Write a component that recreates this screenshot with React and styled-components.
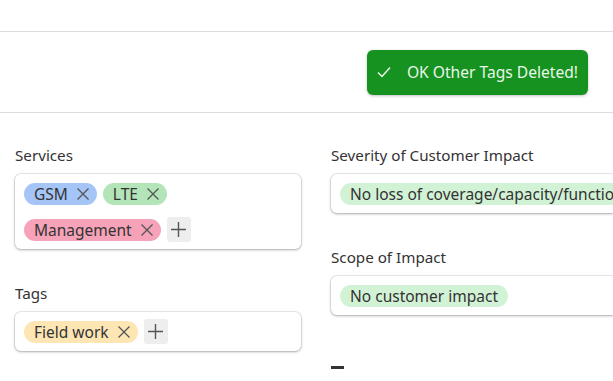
import React from 'react';
import styled, { createGlobalStyle } from 'styled-components';

const Global = createGlobalStyle`
  html, body {
    margin: 0;
    padding: 0;
    background: #fff;
    overflow: hidden;
    font-family: "Noto Sans", "DejaVu Sans", sans-serif;
    color: #333;
  }
`;

const Page = styled.div`
  width: 613px;
  height: 381px;
  overflow: hidden;
`;

const TopBar = styled.div`
  height: 31px;
  border-bottom: 1px solid #dcdcdc;
`;

const Toolbar = styled.div`
  height: 80px;
  display: flex;
  align-items: center;
  justify-content: flex-end;
  padding-right: 25px;
  border-bottom: 1px solid #dcdcdc;
`;

const Toast = styled.div`
  display: flex;
  align-items: center;
  gap: 16px;
  height: 45px;
  padding: 0 10px 0 10px;
  background: #15921f;
  color: #eaf6ea;
  border-radius: 6px;
  box-shadow: 0 1px 3px rgba(0, 0, 0, 0.25);
  font-size: 15.6px;
  white-space: nowrap;
`;

const Content = styled.div`
  display: grid;
  grid-template-columns: 286px 286px;
  column-gap: 30px;
  padding: 32px 15px 0;
`;

const Column = styled.div`
  display: flex;
  flex-direction: column;
`;

const Field = styled.div`
  margin-bottom: 34px;
`;

const Label = styled.div`
  font-size: 15.2px;
  line-height: 20px;
  margin-bottom: 9px;
  color: #333;
`;

const Box = styled.div`
  display: flex;
  flex-wrap: wrap;
  align-items: center;
  row-gap: 11px;
  column-gap: 6px;
  padding: 7px 9px 7px;
  border-radius: 6px;
  background: #fff;
  overflow: hidden;
  box-shadow: 0 0 0 1px rgba(0, 0, 0, 0.07), 0 1px 3px rgba(0, 0, 0, 0.28);
`;

const Chip = styled.span`
  display: inline-flex;
  align-items: center;
  gap: 8px;
  height: 22px;
  margin: 1.5px 0;
  padding: ${(p) => (p.$removable ? '0 7px 0 10px' : '0 10px')};
  border-radius: 11px;
  background: ${(p) => p.$bg};
  font-size: 15.5px;
  color: #333;
  white-space: nowrap;
`;

const AddButton = styled.span`
  display: inline-flex;
  align-items: center;
  justify-content: center;
  width: 24px;
  height: 25px;
  border-radius: 3px;
  background: #eeeeee;
`;

const Stub = styled.div`
  width: 13px;
  height: 3px;
  margin-top: 17px;
  background: #333;
`;

const Cross = () => (
  <svg width="14" height="14" viewBox="0 0 14 14">
    <path d="M1.5 1.5 L12.5 12.5 M12.5 1.5 L1.5 12.5" stroke="#555" strokeWidth="1.3" />
  </svg>
);

const Plus = () => (
  <svg width="17" height="17" viewBox="0 0 17 17">
    <path d="M8.5 1 V16 M1 8.5 H16" stroke="#555" strokeWidth="1.4" />
  </svg>
);

const Check = () => (
  <svg width="14" height="12" viewBox="0 0 14 12">
    <path d="M1 6.5 L5 10.5 L13 1.5" stroke="#eaf6ea" strokeWidth="1.5" fill="none" />
  </svg>
);

const Tag = ({ bg, children }) => (
  <Chip $bg={bg} $removable>
    {children}
    <Cross />
  </Chip>
);

export default function App() {
  return (
    <Page>
      <Global />
      <TopBar />
      <Toolbar>
        <Toast>
          <Check />
          OK Other Tags Deleted!
        </Toast>
      </Toolbar>
      <Content>
        <Column>
          <Field>
            <Label>Services</Label>
            <Box>
              <Tag bg="#a6c5f7">GSM</Tag>
              <Tag bg="#b4e5b8">LTE</Tag>
              <Tag bg="#f6a3b9">Management</Tag>
              <AddButton><Plus /></AddButton>
            </Box>
          </Field>
          <Field>
            <Label>Tags</Label>
            <Box>
              <Tag bg="#fde6b4">Field work</Tag>
              <AddButton><Plus /></AddButton>
            </Box>
          </Field>
        </Column>
        <Column>
          <Field>
            <Label>Severity of Customer Impact</Label>
            <Box>
              <Chip $bg="#d2f2d6">No loss of coverage/capacity/functionality</Chip>
            </Box>
          </Field>
          <Field>
            <Label>Scope of Impact</Label>
            <Box>
              <Chip $bg="#d2f2d6">No customer impact</Chip>
            </Box>
          </Field>
          <Stub />
        </Column>
      </Content>
    </Page>
  );
}
